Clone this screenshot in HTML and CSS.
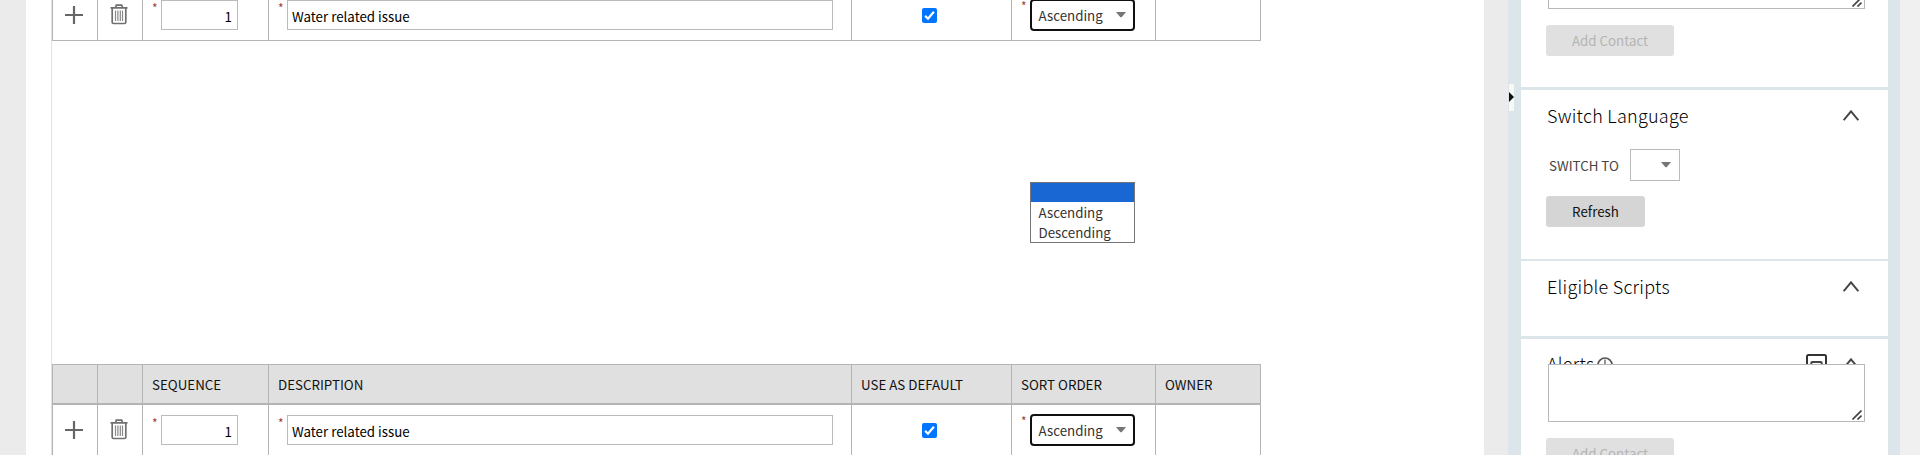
FILE: index.html
```html
<!DOCTYPE html>
<html lang="en">
<head>
<meta charset="utf-8">
<title>Sequence maintenance</title>
<link rel="stylesheet" href="styles.css">
</head>
<body>
<svg class="defs" width="0" height="0" aria-hidden="true">
  <symbol id="plus" viewBox="0 0 18 18"><path d="M9 0V18M0 9H18" stroke="#666" stroke-width="2.200" fill="none"/></symbol>
  <symbol id="trash" viewBox="0 0 18 21"><path d="M0.5 3.800H17.500M5.500 3.500L6.300 1.200H11.700L12.500 3.500M2.200 4V18.200Q2.200 19.500 3.500 19.500H14.500Q15.800 19.500 15.800 18.200V4" stroke="#707070" stroke-width="1.700" fill="none"/><path d="M5.500 6.500V17M7.900 6.500V17M10.300 6.500V17M12.500 6.500V17" stroke="#888" stroke-width="1.200" fill="none"/></symbol>
  <symbol id="arrow" viewBox="0 0 10 6"><path d="M0 0H10L6 4.800Q5 5.800 4 4.800Z" fill="#757575"/></symbol>
  <symbol id="check" viewBox="0 0 15 15"><rect width="15" height="15" rx="2" fill="#0075ff"/><path d="M3.100 7.900L6 10.700L11.900 3.700" stroke="#fff" stroke-width="2.200" fill="none"/></symbol>
  <symbol id="chevron" viewBox="0 0 16 11"><path d="M0.700 10.200L8 1.300L15.300 10.200" stroke="#444" stroke-width="1.900" fill="none"/></symbol>
  <symbol id="grip" viewBox="0 0 10 10"><path d="M0.500 9.500L9.500 0.500M5.500 9.500L9.500 5.500" stroke="#444" stroke-width="1.700" fill="none"/></symbol>
</svg>
<div class="page">
  <main class="content">
    <div class="sheet">
      <div class="row row-top">
        <div class="cell add"><svg class="plus"><use href="#plus"/></svg></div>
        <div class="cell del"><svg class="trash"><use href="#trash"/></svg></div>
        <div class="cell seq"><span class="req">*</span><div class="input right">1</div></div>
        <div class="cell desc"><span class="req">*</span><div class="input">Water related issue</div></div>
        <div class="cell def"><svg class="check"><use href="#check"/></svg></div>
        <div class="cell sort"><span class="req">*</span><div class="select"><span>Ascending</span><svg class="arrow"><use href="#arrow"/></svg></div></div>
        <div class="cell owner"></div>
      </div>
      <div class="gap">
        <div class="menu"><div class="option active"></div><div class="option">Ascending</div><div class="option">Descending</div></div>
      </div>
      <div class="row head">
        <div class="cell add"></div><div class="cell del"></div>
        <div class="cell seq">SEQUENCE</div>
        <div class="cell desc">DESCRIPTION</div>
        <div class="cell def">USE AS DEFAULT</div>
        <div class="cell sort">SORT ORDER</div>
        <div class="cell owner">OWNER</div>
      </div>
      <div class="row">
        <div class="cell add"><svg class="plus"><use href="#plus"/></svg></div>
        <div class="cell del"><svg class="trash"><use href="#trash"/></svg></div>
        <div class="cell seq"><span class="req">*</span><div class="input right">1</div></div>
        <div class="cell desc"><span class="req">*</span><div class="input">Water related issue</div></div>
        <div class="cell def"><svg class="check"><use href="#check"/></svg></div>
        <div class="cell sort"><span class="req">*</span><div class="select"><span>Ascending</span><svg class="arrow"><use href="#arrow"/></svg></div></div>
        <div class="cell owner"></div>
      </div>
    </div>
  </main>
  <aside class="dashboard">
    <div class="handle"><svg viewBox="0 0 5 10" width="5" height="10"><path d="M0 0L5 5L0 10Z" fill="#111"/></svg></div>
    <section class="zone contact">
      <div class="textarea"><svg class="grip"><use href="#grip"/></svg></div>
      <div class="button disabled">Add Contact</div>
    </section>
    <section class="zone language">
      <header><h2>Switch Language</h2><svg class="chevron"><use href="#chevron"/></svg></header>
      <div class="field"><span class="label">SWITCH TO</span><div class="pick"><svg class="arrow"><use href="#arrow"/></svg></div></div>
      <div class="button refresh">Refresh</div>
    </section>
    <section class="zone scripts">
      <header><h2>Eligible Scripts</h2><svg class="chevron"><use href="#chevron"/></svg></header>
    </section>
    <section class="zone alerts">
      <header><h2>Alerts</h2>
        <svg class="info" viewBox="0 0 16 16"><circle cx="8" cy="8" r="7" fill="none" stroke="#555" stroke-width="1.700"/><path d="M8 2.500V10" stroke="#888" stroke-width="1.800"/></svg>
        <svg class="card" viewBox="0 0 21 21"><rect x="1" y="1" width="19" height="19" rx="1.500" fill="none" stroke="#333" stroke-width="2"/><rect x="5.300" y="8" width="10.400" height="8" rx="1" fill="none" stroke="#444" stroke-width="2"/></svg>
        <svg class="chevron"><use href="#chevron"/></svg></header>
      <div class="textarea"><svg class="grip"><use href="#grip"/></svg></div>
      <div class="button disabled">Add Contact</div>
    </section>
  </aside>
</div>
</body>
</html>
```
FILE: styles.css
```css
* { box-sizing: border-box; }
body { margin: 0; overflow: hidden; font: 13.333px/20px "Noto Sans CJK SC", "Noto Sans", sans-serif; color: #111; }
svg { display: block; flex: none; }
.defs { position: absolute; }
.page { display: flex; width: 1920px; height: 455px; overflow: hidden; background: #f0f0f0; }
.content { width: 1508px; padding: 0 24px 0 26px; background: #ebebeb; overflow: hidden; }
.sheet { height: 455px; padding-left: 25px; background: #fff; overflow: hidden; }
.gap { position: relative; height: 323px; border-left: 1px solid #e2e2e2; }
.row { display: flex; width: 1210px; height: 51px; border-left: 1px solid #e2e2e2; }
.row-top { margin-top: -10px; }
.cell { display: flex; align-items: flex-start; border-right: 1px solid #b4b4b4; border-bottom: 1px solid #b4b4b4; padding-top: 10px; }
.add { width: 46px; border-left: 1px solid #b4b4b4; padding-left: 12px; }
.del { width: 45px; padding-left: 12px; }
.seq { width: 126px; padding-left: 9px; }
.desc { width: 583px; padding-left: 9px; }
.def { width: 160px; padding-left: 70px; }
.sort { width: 144px; padding-left: 9px; }
.owner { width: 105px; padding-left: 9px; }
.head { height: 41px; background: #e0e0e0; }
.head .cell { border-top: 1px solid #b4b4b4; border-bottom: 2px solid #b4b4b4; padding-top: 10px; white-space: nowrap; }
.head .seq, .head .desc, .head .def { padding-left: 9px; }
.plus { width: 18px; height: 18px; margin-top: 6px; }
.trash { width: 18px; height: 21px; margin-top: 4px; }
.check { width: 15px; height: 15px; margin-top: 8px; }
.req { width: 9px; margin-top: 1px; font-size: 12px; line-height: 14px; color: #a04038; }
.input { width: 77px; height: 30px; border: 1px solid #bbb; padding: 5px 5px 0 4px; line-height: 21px; color: #000; white-space: nowrap; }
.right { text-align: right; }
.desc .input { width: 546px; }
.sort .req { margin-top: -1px; }
.select { display: flex; justify-content: space-between; width: 105px; height: 32px; margin-top: -1px; padding: 5px 7px 0 6.500px; border: 2px solid #101010; border-radius: 4px; color: #333; }
.arrow { width: 10px; height: 6px; }
.select .arrow { margin-top: 6px; }
.menu { position: absolute; left: 978px; top: 141px; width: 105px; height: 61px; border: 1px solid #767676; background: #fff; color: #333; }
.option { height: 20px; padding-left: 7.500px; line-height: 22px; }
.option.active { height: 19px; background: #1967d2; }
.dashboard { position: relative; width: 392px; height: 455px; padding: 0 12px 0 13px; background: #dce5ea; overflow: hidden; }
.handle { position: absolute; left: 1px; top: 84px; width: 5px; height: 27px; padding-top: 8px; background: #f8f8f4; }
.zone { width: 367px; background: #fff; padding-left: 25px; overflow: hidden; }
.contact { height: 87px; margin-bottom: 3px; }
.language { height: 169px; margin-bottom: 2px; }
.scripts { height: 75px; margin-bottom: 3px; }
.alerts { height: 116px; }
.textarea { position: relative; width: 317px; height: 58px; margin-left: 2px; border: 1px solid #b8b8b8; background: #fff; }
.contact .textarea { margin-top: -49px; }
.grip { position: absolute; right: 2px; bottom: 1px; width: 10px; height: 10px; }
.button { width: 128px; height: 31px; margin-top: 16px; border-radius: 3px; line-height: 31px; text-align: center; }
.disabled { background: #e0e0e0; color: #b4b4b4; }
.refresh { width: 99px; margin-top: 15px; background: #d5d5d5; color: #111; }
header { display: flex; height: 59px; padding: 12px 29px 0 1px; }
h2 { margin: -1px 0 0; font-size: 18px; line-height: 28px; font-weight: 300; letter-spacing: .25px; color: #000; white-space: nowrap; }
.chevron { width: 16px; height: 11px; margin: 8px 0 0 auto; }
.field { display: flex; gap: 10px; padding-left: 3px; }
.label { width: 71px; padding-top: 7px; white-space: nowrap; color: #444; }
.pick { width: 50px; height: 32px; border: 1px solid #bbb; padding: 12px 0 0 30px; }
.alerts header { height: 25px; padding-top: 11px; overflow: hidden; }
.info { width: 16px; height: 16px; margin: 7px 0 0 3px; }
.card { width: 21px; height: 21px; margin: 4px 0 0 auto; }
.alerts .chevron { margin-left: 16px; }
```
